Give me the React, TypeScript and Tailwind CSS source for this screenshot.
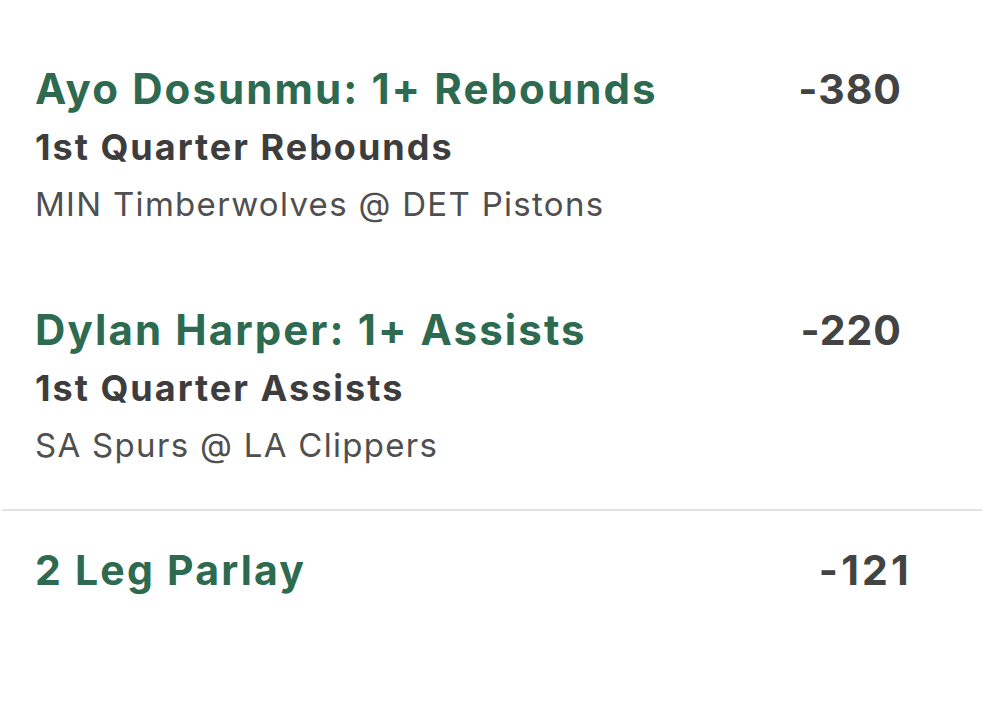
const legs = [
  {
    title: "Ayo Dosunmu: 1+ Rebounds",
    market: "1st Quarter Rebounds",
    game: "MIN Timberwolves @ DET Pistons",
    odds: "-380",
  },
  {
    title: "Dylan Harper: 1+ Assists",
    market: "1st Quarter Assists",
    game: "SA Spurs @ LA Clippers",
    odds: "-220",
  },
];

export default function App() {
  return (
    <div className="w-[982px] h-[702px] bg-white overflow-hidden font-['Inter',sans-serif]">
      <div className="flex flex-col gap-[73px] pt-[62px]">
        {legs.map((leg) => (
          <div key={leg.title} className="flex items-start justify-between pl-[35px] pr-[80px]">
            <div>
              <div className="text-[42px] leading-[54px] font-bold text-[#2d6a4f] tracking-[2.1px]">{leg.title}</div>
              <div className="text-[36px] leading-[62px] font-bold text-[#3d3d3d] tracking-[2px]">{leg.market}</div>
              <div className="text-[33px] leading-[52px] text-[#4f4f4f] tracking-[1.3px]">{leg.game}</div>
            </div>
            <div className="text-[41px] leading-[54px] font-bold text-[#434343] tracking-[1px]">{leg.odds}</div>
          </div>
        ))}
      </div>
      <div className="mt-[38px] ml-[2px] h-[2px] bg-[#e2e2e2]" />
      <div className="flex items-start justify-between pl-[35px] pr-[70px] pt-[32px]">
        <div className="text-[41px] leading-[54px] font-bold text-[#2d6a4f] tracking-[2.2px]">2 Leg Parlay</div>
        <div className="text-[41px] leading-[54px] font-bold text-[#434343] tracking-[3.2px]">-121</div>
      </div>
    </div>
  );
}
